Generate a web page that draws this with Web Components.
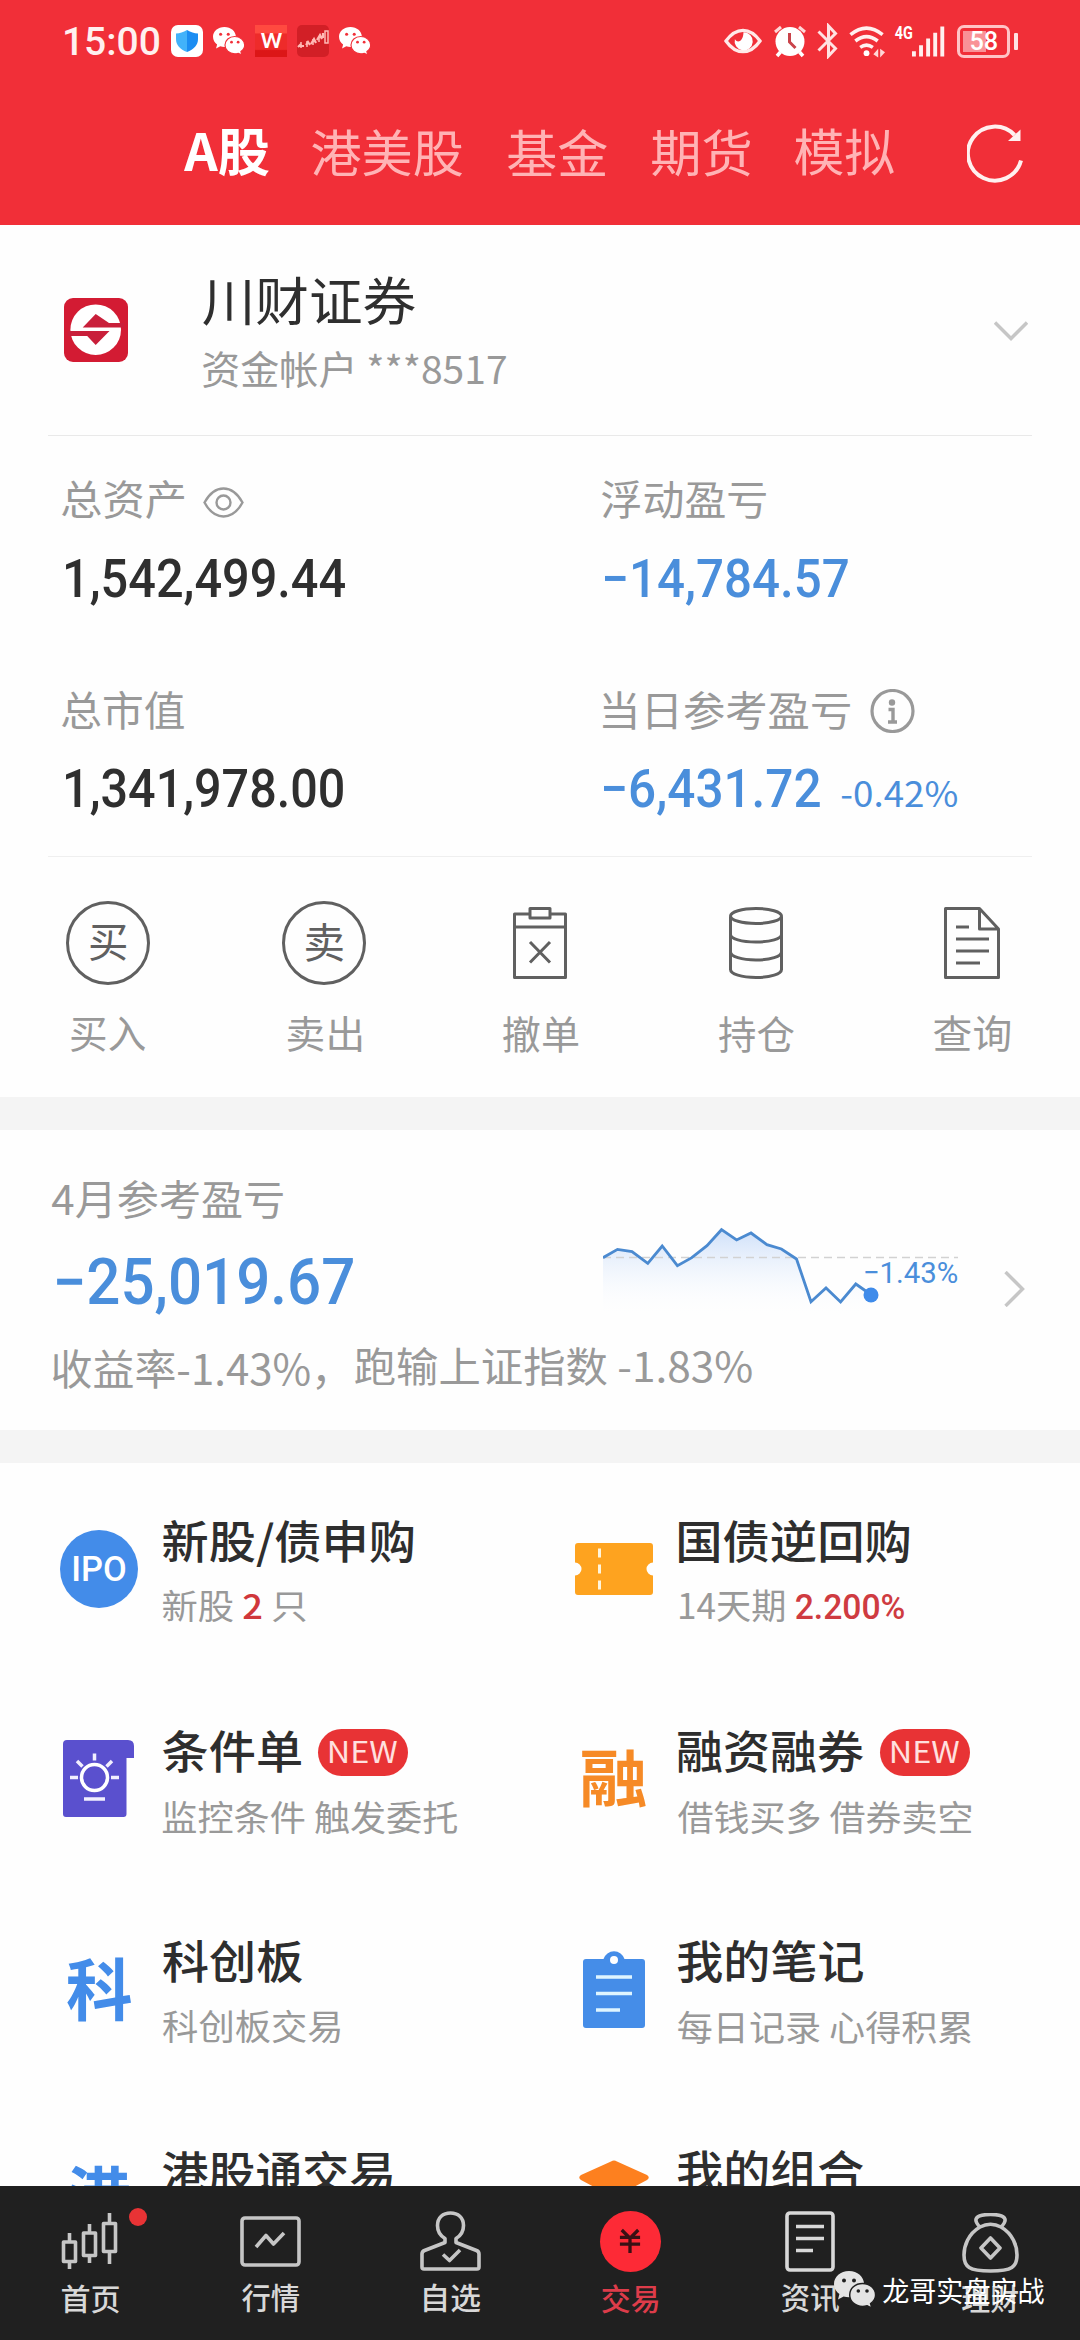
<!DOCTYPE html>
<html lang="zh-CN">
<head>
<meta charset="utf-8">
<title>A股交易</title>
<style>
  html, body { margin: 0; padding: 0; background: #fefefe; }
  body { width: 1080px; height: 2340px; overflow: hidden; font-family: "Noto Sans CJK SC", sans-serif; color: #2f2f2f; }
</style>
</head>
<body>
<trade-app></trade-app>

<script>
function define(name, html, after) {
  const tpl = document.createElement('template');
  tpl.innerHTML = html;
  customElements.define(name, class extends HTMLElement {
    constructor() {
      super();
      this.attachShadow({ mode: 'open' }).appendChild(tpl.content.cloneNode(true));
    }
    connectedCallback() { if (after) after.call(this, this.shadowRoot); }
  });
}

const WECHAT = `<svg viewBox="0 0 42 37" width="100%" height="100%" preserveAspectRatio="none">
  <path fill="var(--bubble,#fff)" d="M15 0C6.500 0 0 5.800 0 13c0 4.300 2.200 7.800 5.400 10L4 28.500l5.600-3c1.700.5 3.500.8 5.400.8 8.500 0 15-6 15-13.300S23.500 0 15 0z"/>
  <path fill="var(--bubble,#fff)" stroke="var(--gap,#f12f38)" stroke-width="1.500" d="M28.500 12.500c-7.200 0-12.800 5-12.800 11.400 0 6.500 5.600 11.500 12.800 11.500 1.700 0 3.200-.3 4.700-.7l4.600 2.400-1.200-4.600c3-2 5-5 5-8.600 0-6.400-5.900-11.400-13.100-11.400z"/>
  <g fill="var(--gap,#f12f38)"><circle cx="10" cy="9.500" r="2"/><circle cx="20" cy="9.500" r="2"/><circle cx="24.300" cy="20" r="1.800"/><circle cx="33" cy="20" r="1.800"/></g>
</svg>`;

define('wechat-mark', `<style>:host{display:block;width:32px;height:28px;flex:none}svg{display:block}</style>${WECHAT}`);

define('status-bar', `
<style>
  :host { display: flex; align-items: center; height: 34px; padding: 24px 62px 0 65px; color: #fff; }
  .icons { display: flex; align-items: center; gap: 10px; margin-left: 12px; flex: 1; }
  svg { display: block; flex: none; }
  .w { width: 32px; height: 32px; background: linear-gradient(#ff4a40 0 26%, #ee2b2a 27% 76%, #dc1617 80%); display: flex; justify-content: center; padding-top: 9px; box-sizing: border-box; }
  .g4 { margin: -18px 0 0 9px; }
  .batt { width: 53px; height: 33px; box-sizing: border-box; border: 3px solid #ffc4c6; border-radius: 7px; margin-left: 12px; display: flex; align-items: center; justify-content: center; background: linear-gradient(#f99297,#f99297) 3px 3px / 23px 21px no-repeat; }
  .nub { width: 4px; height: 17px; background: #ffe2e2; margin-left: 4px; border-radius: 1px; }
</style>
<fit-text w="94" h="29" style="font-family:Roboto;font-weight:500;color:#fff0ef">15:00</fit-text>
<div class="icons">
  <svg width="32" height="32"><defs><linearGradient id="s"><stop offset=".5" stop-color="#42b2fa"/><stop offset=".5" stop-color="#1b8df2"/></linearGradient></defs><rect width="32" height="32" rx="7" fill="#fff"/><path d="M16 5c4 2.500 7 3.300 11 3.600V14c0 6-4 10.500-11 13C9 24.500 5 20 5 14V8.600C9 8.300 12 7.500 16 5z" fill="url(#s)"/></svg>
  <wechat-mark></wechat-mark>
  <div class="w"><fit-text w="21" h="14" style="font-family:Roboto;font-weight:500">W</fit-text></div>
  <svg width="32" height="32"><rect width="32" height="32" rx="5" fill="#d21f26"/><path d="M3 21h4M9 20l2-3 2 3M14 19l3-5 2 4M20 15l3-5 2 4M26 13V8M1 22l3-3" fill="none" stroke="#ffb9b5" stroke-width="2.200"/><rect x="28" y="6" width="3" height="12" fill="none" stroke="#ffb9b5" stroke-width="1.500"/><path d="M4 23v-6M10 22v-6M16 20v-6M22 17v-6" stroke="#ffb9b5" stroke-width="1.500"/></svg>
  <wechat-mark></wechat-mark>
</div>
<svg width="38" height="28" viewBox="0 0 39 28"><path d="M2 14C8 5.500 13 3 19.500 3S31 5.500 37 14c-6 8.500-11 11-17.500 11S8 22.500 2 14z" fill="none" stroke="#ffe9e8" stroke-width="3.400"/><path d="M20 5a9.300 9.300 0 1 1-8.800 7c1.500 4 8.500 4 8.800-7z" fill="#fff"/></svg>
<svg style="margin-left:11px" width="34" height="34" viewBox="0 0 34 34"><path d="M7.500 28L4 32M26.500 28l3.500 4" stroke="#fff" stroke-width="3.500"/><path d="M2 8l6-5M32 8l-6-5" stroke="#ffd7d7" stroke-width="3"/><circle cx="17" cy="17.500" r="14.500" fill="#fff"/><path d="M16.500 9v9l6 6" fill="none" stroke="#c9434a" stroke-width="3"/></svg>
<svg style="margin-left:10px" width="21" height="36" viewBox="0 0 21 36"><path d="M1.500 8.500L18.500 25.500 11.500 33V3L18.500 10.500 1.500 27.500" fill="none" stroke="#ffe2e2" stroke-width="3"/></svg>
<svg style="margin-left:11px" width="37" height="34" viewBox="0 0 38 34"><g fill="none" stroke="#fff0ef" stroke-width="3.600"><path d="M1.500 10.500Q18 -3 34.500 10.500"/><path d="M6.500 17Q18 8 29.500 17"/><path d="M11.500 23.500Q18 19 24.500 23.500"/></g><circle cx="18" cy="29.500" r="3" fill="#fff"/><path d="M30 25v9l-5-3.500zM32 25l5 3.500-5 5.500z" fill="#ffd7d7"/></svg>
<fit-text class="g4" w="17" h="14" style="font-family:Roboto;font-weight:700">4G</fit-text>
<svg width="33" height="32" viewBox="0 0 34 32"><path d="M2 32v-5.500M9.300 32V20.500M16.600 32V13.500M23.900 32V7.500M31.200 32V1" stroke="#fff0ef" stroke-width="4"/></svg>
<div class="batt"><fit-text w="26" h="19" style="font-family:Roboto;font-weight:500">58</fit-text></div><div class="nub"></div>
`);

define('market-tabs', `
<style>
  :host { display: flex; align-items: center; padding: 66px 56px 0 184px; color: #ffb3b5; }
  fit-text { margin-top: -3px; }
  .on { color: #fff; font-weight: 700; }
  svg { margin-left: auto; display: block; }
</style>
<fit-text class="on" w="85" h="47">A股</fit-text>
<fit-text style="margin-left:43px" w="150" h="47">港美股</fit-text>
<fit-text style="margin-left:46px" w="99" h="47">基金</fit-text>
<fit-text style="margin-left:45px" w="98" h="47">期货</fit-text>
<fit-text style="margin-left:45px" w="99" h="47">模拟</fit-text>
<svg width="57" height="60" viewBox="0 0 57 60"><path d="M54 36.500A27 27 0 1 1 47.500 11" fill="none" stroke="#fff0ef" stroke-width="4"/><path d="M53.500 5.500V17H41z" fill="#fff0ef"/></svg>
`);

define('account-card', `
<style>
  :host { display: flex; align-items: flex-start; height: 211px; margin: 0 48px; border-bottom: 1.500px solid #e9e9e9; box-sizing: border-box; padding-left: 16px; }
  svg { display: block; flex: none; }
  .names { display: flex; flex-direction: column; gap: 26px; margin: 52px 0 0 75px; flex: 1; }
  .sub { color: #999; }
</style>
<svg style="margin-top:73px" width="64" height="64" viewBox="0 0 64 64"><rect width="64" height="64" rx="9" fill="#d31b33"/><circle cx="31.700" cy="31.700" r="25.300" fill="#fff"/><path fill="#c91f3a" d="M31.700 16L18.700 29.500H60V25H45z M4 33h41.500L31.700 47l-8.500-9H4z"/></svg>
<div class="names">
  <fit-text w="212" h="49">川财证券</fit-text>
  <fit-text class="sub" w="303" h="36">资金帐户 ***8517</fit-text>
</div>
<svg style="margin:96px 4px 0 0" width="34" height="20" viewBox="0 0 34 20"><path d="M1 1.500l16 16 16-16" fill="none" stroke="#c6c6c6" stroke-width="3.400"/></svg>
`);

define('asset-cell', `
<style>
  :host { display: flex; flex-direction: column; }
  .head { display: flex; align-items: center; height: 44px; color: #999; }
  .val { display: flex; align-items: flex-end; gap: 22px; margin-top: 36px; margin-left: var(--vx, 3px); height: 39px; font-family: Roboto; font-weight: 500; }
</style>
<div class="head"><slot name="label"></slot></div>
<div class="val"><slot></slot></div>
`);

define('asset-grid', `
<style>
  :host { display: grid; grid-template-columns: 540px 1fr; grid-template-rows: 210px 210px; box-sizing: border-box; height: 421px; padding: 43px 0 0 14px; margin: 0 48px; border-bottom: 1.500px solid #efefef; }
  .blue { color: #4a8edb; }
  .thin { font-weight: 400; font-family: "Noto Sans CJK SC"; }
  svg { display: block; }
</style>
<asset-cell style="--vx:4px"><fit-text slot="label" w="122" h="38">总资产</fit-text>
  <svg slot="label" style="margin:3px 0 0 19px" width="41" height="31" viewBox="0 0 41 31"><path d="M1.500 15.500C7 5.500 13.500 1.500 20.500 1.500S34 5.500 39.500 15.500C34 25.500 27.500 29.500 20.500 29.500S7 25.500 1.500 15.500z" fill="none" stroke="#999" stroke-width="2.400"/><circle cx="20.500" cy="15.500" r="7" fill="none" stroke="#999" stroke-width="2.400"/></svg>
  <fit-text w="279" h="39">1,542,499.44</fit-text></asset-cell>
<asset-cell><fit-text slot="label" w="164" h="38">浮动盈亏</fit-text><fit-text class="blue" w="243" h="39">−14,784.57</fit-text></asset-cell>
<asset-cell style="--vx:4px"><fit-text slot="label" w="122" h="38">总市值</fit-text><fit-text w="277" h="39">1,341,978.00</fit-text></asset-cell>
<asset-cell style="--vx:2px"><fit-text slot="label" style="margin-left:1px" w="247" h="38">当日参考盈亏</fit-text>
  <svg slot="label" style="margin-left:20px" width="45" height="44" viewBox="0 0 45 44"><circle cx="22.500" cy="22" r="20.500" fill="none" stroke="#999" stroke-width="3.200"/><circle cx="22" cy="13.500" r="3.200" fill="#999"/><path d="M18.500 20.500H23V33M18 33h9" fill="none" stroke="#999" stroke-width="3.400"/></svg>
  <fit-text class="blue" w="216" h="39">−6,431.72</fit-text><fit-text class="blue thin" w="115" h="27">-0.42%</fit-text></asset-cell>
`);

define('action-item', `
<style>
  :host { display: flex; flex-direction: column; align-items: center; width: 84px; }
  .ic { width: 84px; height: 84px; display: flex; align-items: center; justify-content: center; box-sizing: border-box; color: #606060; }
  :host([round]) .ic { border: 3px solid #606060; border-radius: 50%; }
  .lb { margin-top: 31px; color: #999; }
</style>
<div class="ic"><slot name="icon"></slot></div>
<div class="lb"><slot></slot></div>
`);

define('action-row', `
<style>
  :host { display: flex; justify-content: space-between; height: 240px; box-sizing: border-box; padding: 44px 66px 0; }
  svg { display: block; fill: none; stroke: #606060; stroke-width: 3; stroke-linejoin: round; }
</style>
<action-item round><fit-text slot="icon" w="36" h="36">买</fit-text><fit-text w="74" h="35">买入</fit-text></action-item>
<action-item round><fit-text slot="icon" w="37" h="38">卖</fit-text><fit-text w="73" h="35">卖出</fit-text></action-item>
<action-item><svg slot="icon" width="54" height="72" viewBox="0 0 54 72"><path d="M17 7H1.500v63.500h51V7H37M1.500 20h51M17 1.500h20v9.500H17zM17 35l20 20.500M37 35L17 55.500"/></svg><fit-text w="75" h="36">撤单</fit-text></action-item>
<action-item><svg slot="icon" width="54" height="72" viewBox="0 0 54 72"><path d="M1.500 9.500v53c0 4.500 11 8 25.500 8s25.500-3.500 25.500-8v-53M1.500 27.500c0 4.300 11 7.500 25.500 7.500s25.500-3.200 25.500-7.500M1.500 45c0 4.500 11 8 25.500 8s25.500-3.500 25.500-8"/><ellipse cx="27" cy="9" rx="25.500" ry="7.500"/></svg><fit-text w="75" h="36">持仓</fit-text></action-item>
<action-item><svg slot="icon" width="56" height="72" viewBox="0 0 56 72"><path d="M1.500 1.500h34L54.500 22v48.500h-53zM35.500 1.500V22h19M12 20h13M12 32h33M12 44h33M12 56h24"/></svg><fit-text w="76" h="36">查询</fit-text></action-item>
`);

define('month-profit', `
<style>
  :host { display: flex; height: 300px; border-top: 33px solid #f4f4f4; border-bottom: 33px solid #f4f4f4; padding-left: 52px; }
  .l { width: 551px; display: flex; flex-direction: column; }
  .blue { color: #4a8edb; font-family: Roboto; font-weight: 500; }
  .note { display: flex; align-items: flex-start; gap: 30px; margin-top: 42px; margin-left: 1px; }
  .grey { color: #999; }
  .chart { display: grid; margin-top: 96px; width: 358px; height: 96px; }
  .chart > * { grid-area: 1 / 1; }
  svg { display: block; }
</style>
<div class="l">
  <fit-text class="grey" style="margin-top:51px" w="231" h="39">4月参考盈亏</fit-text>
  <fit-text class="blue" style="margin:39px 0 0 5px" w="296" h="47">−25,019.67</fit-text>
  <div class="note"><fit-text class="grey" style="margin-top:3px" w="272" h="39">收益率-1.43%，</fit-text><fit-text class="grey" w="397" h="38">跑输上证指数 -1.83%</fit-text></div>
</div>
<div class="chart">
  <svg width="358" height="96"><defs><linearGradient id="g" x1="0" y1="0" x2="0" y2="1"><stop stop-color="#cfe0f9"/><stop offset="1" stop-color="#fff" stop-opacity="0"/></linearGradient></defs>
    <path fill="url(#g)" d="M0 31.700L14.500 23.400 29 25.700 44.800 37.400 59.200 20 74.400 39.700 88.800 31.700 104 19.700 118.500 3.700 133.600 14 148 7 163.900 18.700 178.400 23 193.500 33 208 75.700 223 62 237.600 76 252.800 58 267 68V92H0z"/>
    <path d="M0 31.500H355" stroke="#d2d2d2" stroke-width="1.500" stroke-dasharray="8 5"/>
    <path fill="none" stroke="#4b8ad0" stroke-width="2.800" d="M0 31.700L14.500 23.400 29 25.700 44.800 37.400 59.200 20 74.400 39.700 88.800 31.700 104 19.700 118.500 3.700 133.600 14 148 7 163.900 18.700 178.400 23 193.500 33 208 75.700 223 62 237.600 76 252.800 58 267 68"/>
    <circle cx="268" cy="69" r="7.500" fill="#3f8bea"/></svg>
  <fit-text class="blue" style="margin:36px 0 0 262px;font-weight:400" w="92" h="22">−1.43%</fit-text>
</div>
<svg style="margin:141px 0 0 43px" width="21" height="36" viewBox="0 0 21 36"><path d="M1.500 1l17 17-17 17" fill="none" stroke="#c6c6c6" stroke-width="3.400"/></svg>
`);

define('feature-tile', `
<style>
  :host { display: flex; gap: 25px; height: 210px; box-sizing: border-box; padding-top: 58px; }
  .icon { width: 78px; height: 78px; margin-top: 9px; display: flex; align-items: center; justify-content: center; flex: none; }
  .t { display: flex; align-items: center; height: 43px; gap: 17px; font-weight: 500; color: #2e2e2e; }
  .s { display: flex; align-items: center; gap: 12px; margin-top: 27px; color: #999; }
  .new { display: none; width: 90px; height: 47px; border-radius: 24px; background: #e83335; color: #ffe0df; align-items: center; justify-content: center; font-weight: 400; }
  :host([new]) .new { display: flex; }
</style>
<div class="icon"><slot name="icon"></slot></div>
<div><div class="t"><slot name="title"></slot><div class="new"><fit-text w="67" h="22">NEW</fit-text></div></div>
<div class="s"><slot></slot></div></div>
`);

define('feature-grid', `
<style>
  :host { display: grid; grid-template-columns: 515px 1fr; grid-auto-rows: 210px; padding-left: 60px; }
  svg { display: block; flex: none; }
  b { color: #d0373b; font-weight: 500; }
  .ipo { width: 78px; height: 78px; border-radius: 50%; background: #438ce9; display: flex; align-items: center; justify-content: center; color: #fff; }
</style>
<feature-tile><div slot="icon" class="ipo"><fit-text w="51" h="26" style="font-family:Roboto;font-weight:500">IPO</fit-text></div>
  <fit-text slot="title" w="250" h="43">新股/债申购</fit-text><fit-text w="142" h="32">新股 <b>2</b> 只</fit-text></feature-tile>
<feature-tile><svg slot="icon" width="78" height="52" viewBox="0 0 78 52"><path fill="#fea31f" d="M3 0h72q3 0 3 3v16.500a6.500 6.500 0 0 0 0 13V49q0 3-3 3H3q-3 0-3-3V32.500a6.500 6.500 0 0 0 0-13V3Q0 0 3 0z"/><path d="M24.500 5.500v9M24.500 21.500v9M24.500 37.500v9" stroke="#fff5dc" stroke-width="3"/></svg>
  <fit-text slot="title" style="margin-left:1px" w="230" h="43">国债逆回购</fit-text><fit-text style="margin-left:2px" w="104" h="32">14天期</fit-text><fit-text style="font-family:Roboto;font-weight:500;color:#cf3b41" w="108" h="26">2.200%</fit-text></feature-tile>
<feature-tile new><svg slot="icon" width="78" height="78" viewBox="0 0 78 78"><path fill="#5a50ce" d="M7 0h61q6 0 6 6v12h-7.500v56q0 3-3 3H6q-3 0-3-3V4q0-4 4-4z"/><circle cx="34.500" cy="37.500" r="13" fill="none" stroke="#fff" stroke-width="3.500"/><path d="M34.500 13.500v7M17 21l5.500 5.500M52 21l-5.500 5.500M10 37.500h8M51 37.500h8M24 59h21" stroke="#f2efff" stroke-width="3.500"/></svg>
  <fit-text slot="title" w="138" h="43">条件单</fit-text><fit-text w="294" h="33">监控条件 触发委托</fit-text></feature-tile>
<feature-tile new><fit-text slot="icon" w="64" h="58" style="font-weight:700;color:#f68a26">融</fit-text>
  <fit-text slot="title" w="185" h="43">融资融券</fit-text><fit-text w="293" h="33">借钱买多 借券卖空</fit-text></feature-tile>
<feature-tile><fit-text slot="icon" w="64" h="64" style="font-weight:700;color:#438ce9">科</fit-text>
  <fit-text slot="title" w="139" h="43">科创板</fit-text><fit-text w="177" h="33">科创板交易</fit-text></feature-tile>
<feature-tile><svg slot="icon" width="64" height="78" viewBox="0 0 64 78"><path fill="#458de8" d="M4 9h17.500a11 11 0 0 1 21 0H60q3 0 3 3v63q0 3-3 3H4q-3 0-3-3V12q0-3 3-3z"/><circle cx="32" cy="10" r="4" fill="#fff"/><path d="M14 27h36M14 43.500h36M14 60h24" stroke="#dff5ff" stroke-width="3.500"/></svg>
  <fit-text slot="title" w="185" h="43">我的笔记</fit-text><fit-text w="293" h="33">每日记录 心得积累</fit-text></feature-tile>
<feature-tile><fit-text slot="icon" w="62" h="64" style="font-weight:700;color:#438ce9">港</fit-text>
  <fit-text slot="title" w="229" h="43">港股通交易</fit-text></feature-tile>
<feature-tile><svg slot="icon" width="78" height="78" viewBox="0 0 78 78"><path fill="#fd801f" d="M36 1.500q3-2 6 0L72 15q3.500 2.500 0 5L42 36q-3 1.500-6 0L6 20q-3.500-2.500 0-5z"/></svg>
  <fit-text slot="title" w="185" h="43">我的组合</fit-text></feature-tile>
`);

define('nav-item', `
<style>
  :host { display: flex; flex-direction: column; align-items: center; flex: 1; color: #d8d8d8; position: relative; }
  .ic { height: 62px; margin-top: 24px; display: flex; align-items: center; justify-content: center; }
  .lb { margin-top: 13px; font-weight: 500; }
  .dot { display: none; position: absolute; left: 129px; top: 22px; width: 18px; height: 18px; border-radius: 50%; background: #e83335; }
  :host([dot]) .dot { display: block; }
  :host([on]) { color: #dd3c4a; }
</style>
<div class="ic"><slot name="icon"></slot></div><div class="lb"><slot></slot></div><div class="dot"></div>
`);

define('bottom-nav', `
<style>
  :host { display: flex; height: 154px; flex: none; background: #202020; position: relative; }
  svg { display: block; fill: none; stroke: #c6c6c6; stroke-width: 3.600; stroke-linejoin: round; }
  .wm { position: absolute; left: 834px; top: 85px; display: flex; color: #fff; --bubble: #e4e4e4; --gap: #202020; }
  .yen { width: 61px; height: 61px; border-radius: 50%; background: #fd2a36; display: flex; align-items: center; justify-content: center; }
</style>
<nav-item dot><svg slot="icon" width="58" height="56" viewBox="0 0 58 56"><path d="M2.500 29h12v19.500h-12zM8.500 20v9M8.500 48.500V56M22.500 20h12v22.500h-12zM28.500 11v9M28.500 42.500V50M42.500 10.500h12v28h-12zM48.500 0v10.500M48.500 38.500V51"/></svg><fit-text w="57" h="28">首页</fit-text></nav-item>
<nav-item><svg slot="icon" width="61" height="51" viewBox="0 0 61 51"><rect x="2" y="2" width="57" height="47" rx="3"/><path d="M16 31l10-11.500L33.500 28 44 17"/></svg><fit-text w="57" h="28">行情</fit-text></nav-item>
<nav-item><svg slot="icon" width="61" height="60" viewBox="0 0 61 60"><path d="M25 27.500C19 24 17.500 19 17.500 14.500 17.500 6.500 23 2 30.500 2s13 4.500 13 12.500c0 4.500-1.500 9.500-7.500 13v4l20.500 8q2.500 1 2.500 3.500v13q0 2-2 2H4q-2 0-2-2V43q0-2.500 2.500-3.500l20.500-8z"/><path d="M23 43.500l6.500 6L40 39"/></svg><fit-text style="margin-left:3px" w="56" h="28">自选</fit-text></nav-item>
<nav-item on><div slot="icon" class="yen"><svg width="22" height="26" viewBox="0 0 24 26" style="stroke:#3a1014"><path d="M3 1l9 9 9-9M1 9h22M1 16.500h22M12 10v16"/></svg></div><fit-text w="56" h="28">交易</fit-text></nav-item>
<nav-item><svg slot="icon" width="50" height="61" viewBox="0 0 50 61" style="stroke:#d8d8d8"><rect x="2" y="2" width="46" height="57" rx="3"/><path d="M11 15.500h28M11 27.500h28M11 39.500h17"/></svg><fit-text w="57" h="28">资讯</fit-text></nav-item>
<nav-item><svg slot="icon" style="margin-top:3px" width="57" height="60" viewBox="0 0 57 60"><path d="M18 14C10 6 14 1.500 28.500 1.500S47 6 39 14M18 14q10.500-5.500 21 0C51 21 55 33 55 42c0 12-5 16-26.500 16S2 54 2 42c0-9 4-21 16-28zM28.500 25l9.500 10-9.500 10-9.500-10z"/></svg><fit-text w="56" h="28">理财</fit-text></nav-item>
<div class="wm"><wechat-mark style="width:42px;height:37px"></wechat-mark><fit-text style="margin:7px 0 0 7px" w="161" h="27">龙哥实盘实战</fit-text></div>
`);

define('trade-app', `
<style>
  :host { display: flex; flex-direction: column; width: 1080px; height: 2340px; overflow: hidden; background: #fefefe; }
  header { height: 225px; flex: none; background: #f12f38; }
  main { flex: 1; min-height: 0; overflow: hidden; }
</style>
<header><status-bar></status-bar><market-tabs></market-tabs></header>
<main>
  <account-card></account-card>
  <asset-grid></asset-grid>
  <action-row></action-row>
  <month-profit></month-profit>
  <feature-grid></feature-grid>
</main>
<bottom-nav></bottom-nav>
`);

/* Text whose painted bounds fill a w x h box; commas and slashes do not count toward the height. */
const pen = document.createElement('canvas').getContext('2d');
define('fit-text', `
<style>
  :host { display: block; flex: none; }
  span { display: block; width: max-content; white-space: pre; line-height: 1; transform-origin: 0 0; }
</style><span><slot></slot></span>`, function (root) {
  const w = +this.getAttribute('w'), h = +this.getAttribute('h');
  const cs = getComputedStyle(this), text = this.textContent, span = root.querySelector('span');
  pen.font = `${cs.fontWeight} 200px ${cs.fontFamily}`;
  const body = pen.measureText(text.replace(/[,，/]/g, ''));
  const size = 200 * h / (body.actualBoundingBoxAscent + body.actualBoundingBoxDescent);
  const k = size / 200, all = pen.measureText(text);
  const scale = w / ((all.actualBoundingBoxLeft + all.actualBoundingBoxRight) * k);
  const base = size / 2 + (all.fontBoundingBoxAscent - all.fontBoundingBoxDescent) * k / 2;
  const dy = body.actualBoundingBoxAscent * k - base;
  this.style.width = w + 'px';
  this.style.height = h + 'px';
  span.style.fontSize = size + 'px';
  span.style.transform = `translate(${all.actualBoundingBoxLeft * k * scale}px, ${dy}px) scaleX(${scale})`;
});
</script>
</body>
</html>
